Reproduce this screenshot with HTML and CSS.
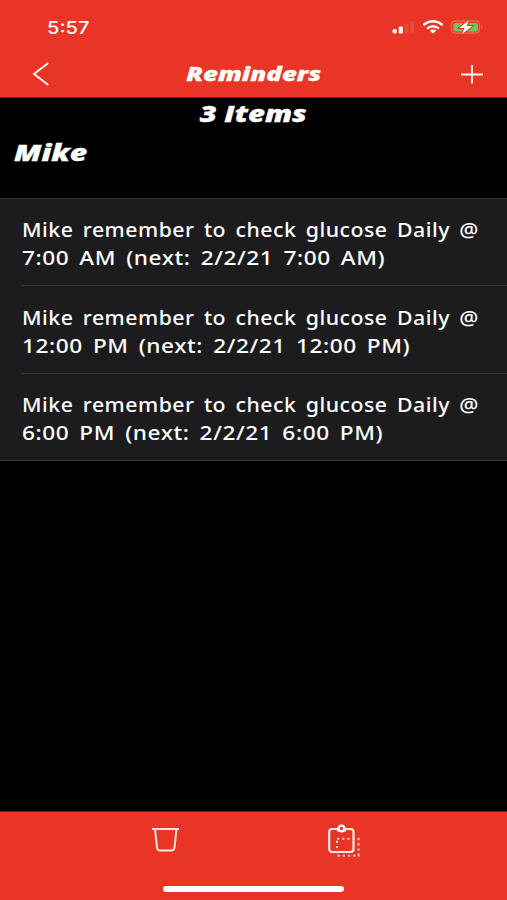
FILE: index.html
```html
<!DOCTYPE html>
<html lang="en">
<head>
    <meta charset="UTF-8">
    <meta name="viewport" content="width=device-width, initial-scale=1.0">
    <title>Reminders</title>
    <link rel="stylesheet" href="styles.css">
</head>
<body>
    <header class="header">
        <div class="status-bar">
            <span class="time">5:57</span>
            <svg class="status-icons" width="92" height="20" viewBox="0 0 92 20">
                <!-- signal -->
                <g fill="#fff">
                    <rect x="0.5" y="9" width="4.5" height="4.5" rx="1.8"/>
                    <rect x="6.7" y="6.5" width="4.2" height="7" rx="1.2"/>
                    <rect x="12.7" y="4" width="3.6" height="9.5" rx="1" opacity=".1"/>
                    <rect x="18.3" y="1" width="3.6" height="12.5" rx="1" opacity=".1"/>
                </g>
                <!-- wifi -->
                <g fill="none" stroke="#fff" stroke-width="2.3">
                    <path d="M31.4 5Q41 -2.4 50.6 5"/>
                    <path d="M35 8.6Q41 3.9 47 8.6"/>
                </g>
                <path d="M37.6 10.6Q41 8.2 44.4 10.6L41 13.6Z" fill="#fff"/>
                <!-- battery -->
                <rect x="59.5" y="1" width="28" height="12" rx="3.2" fill="none" stroke="#f27b68" stroke-width="1"/>
                <rect x="61.5" y="3" width="24.5" height="8.4" rx="1.6" fill="#62ce62"/>
                <path d="M89.3 5Q91.3 7 89.3 9Z" fill="#f27b68"/>
                <path d="M77 0L67 8H72.5L70 14.3L80.2 6H74.5Z" fill="#fff" stroke="#e93526" stroke-width="2" paint-order="stroke"/>
            </svg>
        </div>
        <nav class="nav-bar">
            <svg class="back" width="20" height="28" viewBox="0 0 20 28">
                <path d="M16.3 3L2 14L16.3 25" fill="none" stroke="#fff" stroke-width="1.8"/>
            </svg>
            <h1 class="title">Reminders</h1>
            <svg class="add" width="24" height="22" viewBox="0 0 24 22">
                <path d="M1 11.5H23M12 2V20.5" fill="none" stroke="#fff" stroke-width="1.8"/>
            </svg>
        </nav>
    </header>

    <main class="content">
        <p class="count">3 Items</p>
        <h2 class="person">Mike</h2>
        <ul class="reminders">
            <li class="reminder">
                <p class="line">Mike remember to check glucose Daily @</p>
                <p class="line schedule">7:00 AM (next: 2/2/21 7:00 AM)</p>
            </li>
            <li class="reminder">
                <p class="line">Mike remember to check glucose Daily @</p>
                <p class="line schedule">12:00 PM (next: 2/2/21 12:00 PM)</p>
            </li>
            <li class="reminder">
                <p class="line">Mike remember to check glucose Daily @</p>
                <p class="line schedule">6:00 PM (next: 2/2/21 6:00 PM)</p>
            </li>
        </ul>
    </main>

    <footer class="toolbar">
        <div class="tools">
            <svg width="30" height="26" viewBox="0 0 30 26">
                <path d="M1 3H28M4 3L6 21.5Q6.3 24.5 9 24.5H20.5Q23.2 24.5 23.5 21.5L25.5 3" fill="none" stroke="#ffe5e1" stroke-width="2"/>
            </svg>
            <svg class="paste" width="32" height="34" viewBox="0 0 32 34">
                <rect x="1.2" y="4" width="24.3" height="23" rx="3" fill="none" stroke="#ffe9e5" stroke-width="2.2"/>
                <rect x="9" y="13.7" width="21.5" height="17" fill="none" stroke="#ffd2ca" stroke-width="2" stroke-dasharray="2.2 3"/>
                <path d="M9 4.5H18" stroke="#fff" stroke-width="4"/>
                <circle cx="13.5" cy="3.5" r="2.8" fill="#e93526" stroke="#fff" stroke-width="2.2"/>
            </svg>
        </div>
        <div class="home-indicator"></div>
    </footer>
</body>
</html>
```
FILE: styles.css
```css
* {
    box-sizing: border-box;
}
body {
    display: flex;
    flex-direction: column;
    height: 900px;
    margin: 0;
    overflow: hidden;
    background-color: #000;
    color: #fff;
    font-family: "Open Sans", "Noto Sans", sans-serif;
}
h1, h2, p, ul {
    margin: 0;
    padding: 0;
}
svg {
    display: block;
    overflow: visible;
}
.header {
    height: 98px;
    background-color: #e93526;
    border-bottom: 1px solid #8c2018;
}
.status-bar {
    display: flex;
    justify-content: space-between;
    height: 50px;
    padding: 15px 23px 0 47px;
}
.time {
    font-family: Inter, sans-serif;
    font-size: 17px;
    font-weight: 500;
    line-height: 26px;
    transform: scaleX(1.18);
    transform-origin: left;
}
.status-icons {
    margin-top: 5px;
}
.nav-bar {
    display: grid;
    grid-template-columns: 20px 1fr 24px;
    align-items: center;
    height: 47px;
    padding: 0 23px 0 32px;
}
.title, .count, .person {
    width: max-content;
    font-style: italic;
    font-weight: 800;
    white-space: nowrap;
    -webkit-text-stroke: 0.3px #fff;
}
.title {
    justify-self: center;
    margin-right: 5px;
    font-size: 19px;
    transform: scaleX(1.36);
}
.count {
    height: 32px;
    margin: 0 auto;
    font-size: 22px;
    line-height: 30px;
    transform: scaleX(1.33);
}
.person {
    height: 68px;
    margin-left: 14px;
    font-size: 22px;
    line-height: 45px;
    transform: scaleX(1.37);
    transform-origin: left;
}
.reminders {
    list-style: none;
    background-color: #1c1c1e;
    border-top: 1px solid #343436;
    border-bottom: 1px solid #3c3c3e;
}
.reminder {
    height: 88px;
    margin-left: 22px;
    padding-top: 18px;
    border-bottom: 1px solid #3a3a3c;
}
.reminder:first-child {
    height: 87px;
    padding-top: 17px;
}
.reminder:last-child {
    height: 86px;
    padding-top: 17px;
    border-bottom: none;
}
.line {
    width: max-content;
    height: 28px;
    font-family: "Noto Sans", sans-serif;
    font-size: 19px;
    font-weight: 500;
    line-height: 28px;
    letter-spacing: 0.45px;
    word-spacing: 3px;
    white-space: nowrap;
    transform: scaleX(1.12);
    transform-origin: left;
}
.schedule {
    letter-spacing: 0.5px;
    transform: scaleX(1.19);
}
.toolbar {
    height: 89px;
    margin-top: auto;
    background-color: #e93526;
    border-top: 1px solid #8c2018;
}
.tools {
    display: flex;
    justify-content: space-between;
    height: 74px;
    padding: 14px 147px 0 151px;
}
.paste {
    margin-top: -1px;
}
.home-indicator {
    width: 181px;
    height: 6px;
    margin: 0 auto;
    border-radius: 3px;
    background-color: #fff;
}
```
